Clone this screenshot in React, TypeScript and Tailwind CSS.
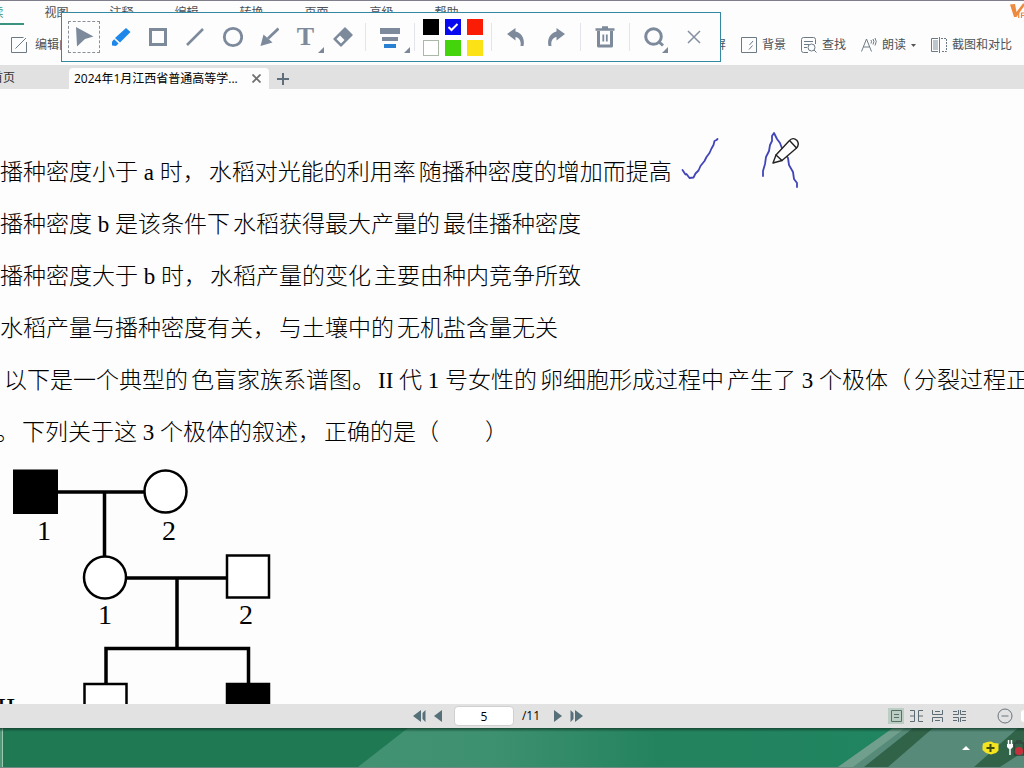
import type { ReactNode } from "react";
import clsx from "clsx";

const menus = ["阅读", "视图", "注释", "编辑", "转换", "页面", "高级", "帮助"];

const colors = [
  { name: "black", className: "bg-black" },
  { name: "blue", className: "bg-[#0808f0]" },
  { name: "red", className: "bg-[#fb1c06]" },
  { name: "white", className: "border border-[#a9b8a9] bg-white" },
  { name: "green", className: "bg-[#43d40b]" },
  { name: "yellow", className: "bg-[#fbe216]" },
];

const lines = [
  ["播种密度小于 a 时，", "水稻对光能的利用率", "随播种密度的增加而提高"],
  ["播种密度 b 是该条件下", "水稻获得最大产量的", "最佳播种密度"],
  ["播种密度大于 b 时，", "水稻产量的变化", "主要由种内竞争所致"],
  ["水稻产量与播种密度有关，", "与土壤中的", "无机盐含量无关"],
  ["以下是一个典型的", "色盲家族系谱图。", "II 代 1 号女性的", "卵细胞形成过程中", "产生了 3 个极体（", "分裂过程正常"],
  ["。", "下列关于这 3 个极体的叙述，", "正确的是（　　）"],
];

function ToolButton({ label, wide, corner, children }: { label: string; wide?: boolean; corner?: boolean; children: ReactNode }) {
  return (
    <button type="button" aria-label={label} className={clsx("relative flex h-full items-center justify-center", wide ? "w-10" : "w-[37px]")}>
      {children}
      {corner ? (
        <svg className="absolute right-0 bottom-2 size-[6px]" viewBox="0 0 6 6" aria-hidden="true">
          <path d="M6 0v6H0z" fill="#7c8797" />
        </svg>
      ) : null}
    </button>
  );
}

function Divider() {
  return <span className="mx-1 h-7 w-px shrink-0 bg-[#e3e5ea]" />;
}

function DrawingToolbar() {
  return (
    <div role="toolbar" aria-label="画笔" className="absolute top-3 left-[61px] z-10 flex h-[50px] items-center border border-[#3389a3] bg-[#fdfdfe] pr-[6px] pl-[3px] text-[#7c8a9b]">
      <ToolButton label="选择">
        <span className="flex size-8 items-center justify-center border border-dashed border-[#8b8f96]">
          <svg className="size-5" viewBox="0 0 20 20" aria-hidden="true">
            <path d="M2 0 19.500 9.500 11 12 3 19.500z" fill="currentColor" />
          </svg>
        </span>
      </ToolButton>
      <ToolButton label="画笔">
        <svg className="size-5" viewBox="0 0 20 20" fill="#1e87ea" aria-hidden="true">
          <path d="M15 1 19.500 5 9 15.500 4 11z" />
          <path d="M3.200 12.300 7.500 16.500 5 19 1 18.500V14.500z" />
        </svg>
      </ToolButton>
      <ToolButton label="矩形">
        <svg className="size-5" viewBox="0 0 20 20" fill="none" stroke="currentColor" strokeWidth="3" aria-hidden="true">
          <path d="M2.500 2.500h15v15h-15z" />
        </svg>
      </ToolButton>
      <ToolButton label="直线">
        <svg className="size-5" viewBox="0 0 20 20" fill="none" stroke="currentColor" strokeWidth="2.500" aria-hidden="true">
          <path d="M2 18 18 2" />
        </svg>
      </ToolButton>
      <ToolButton label="圆形">
        <svg className="size-[22px]" viewBox="0 0 22 22" fill="none" stroke="currentColor" strokeWidth="2.800" aria-hidden="true">
          <circle cx="12" cy="11" r="8.700" />
        </svg>
      </ToolButton>
      <ToolButton label="箭头">
        <svg className="size-5" viewBox="0 0 20 20" aria-hidden="true">
          <path d="M19.500 1.500 9 11.500" stroke="currentColor" strokeWidth="2.800" />
          <path d="M1.500 19 4.500 7.500 13.500 15.500z" fill="currentColor" />
        </svg>
      </ToolButton>
      <ToolButton label="文字" corner>
        <span className="font-['Liberation_Serif',serif] text-[26px] leading-none font-bold">T</span>
      </ToolButton>
      <ToolButton label="橡皮擦">
        <svg className="size-[22px]" viewBox="0 0 22 22" aria-hidden="true">
          <path d="M13 2 20 9 9 20 2 13z" fill="currentColor" stroke="currentColor" strokeWidth="1.500" strokeLinejoin="round" />
          <path d="M8 9.500 12.500 14 9 17.500 4.500 13z" fill="#fff" />
        </svg>
      </ToolButton>
      <Divider />
      <ToolButton label="线宽" wide corner>
        <svg className="size-[22px]" viewBox="0 0 22 22" aria-hidden="true">
          <path d="M1 2h20v6H1zM3 11h16v4H3z" fill="currentColor" />
          <path d="M5 18h12v4H5z" fill="#2a80d2" />
        </svg>
      </ToolButton>
      <Divider />
      <div className="grid grid-cols-3 gap-x-[6px] gap-y-[5px] px-1">
        {colors.map((color) => (
          <button key={color.name} type="button" aria-label={color.name} className={clsx("size-4", color.className)}>
            {color.name === "blue" ? (
              <svg viewBox="0 0 16 16" fill="none" stroke="#fff" strokeWidth="2" aria-hidden="true">
                <path d="m3.500 8 3 3 6-6" />
              </svg>
            ) : null}
          </button>
        ))}
      </div>
      <Divider />
      <ToolButton label="撤销" wide>
        <svg className="size-5" viewBox="0 0 20 20" fill="currentColor" aria-hidden="true">
          <path d="M1 7 9.500 1v3.500C16 6 19 12 17.500 19h-3C15.500 14 13 10.500 9.500 10v3.500z" />
        </svg>
      </ToolButton>
      <ToolButton label="重做" wide>
        <svg className="size-5" viewBox="0 0 20 20" fill="currentColor" aria-hidden="true">
          <path d="M19 7 10.500 1v3.500C4 6 1 12 2.500 19h3C4.500 14 7 10.500 10.500 10v3.500z" />
        </svg>
      </ToolButton>
      <Divider />
      <ToolButton label="删除" wide>
        <svg className="size-[22px]" viewBox="0 0 22 22" fill="none" stroke="currentColor" aria-hidden="true">
          <path d="M1.500 3.500h19M8 1.500h6" strokeWidth="2.500" />
          <path d="M4.500 5v15h13V5" strokeWidth="3" strokeLinejoin="round" />
          <path d="M9.300 8.500v7M12.800 8.500v7" strokeWidth="1.800" />
        </svg>
      </ToolButton>
      <Divider />
      <ToolButton label="放大镜" wide>
        <svg className="size-[22px]" viewBox="0 0 22 22" fill="none" stroke="currentColor" strokeWidth="3" aria-hidden="true">
          <circle cx="10.500" cy="10.500" r="7.800" />
          <path d="m15.500 15.500 4.500 4" />
        </svg>
        <svg className="absolute right-[6px] bottom-2 size-[6px]" viewBox="0 0 6 6" aria-hidden="true">
          <path d="M6 0v6H0z" fill="#7c8797" />
        </svg>
      </ToolButton>
      <ToolButton label="关闭" wide>
        <svg className="size-[14px]" viewBox="0 0 14 14" fill="none" stroke="#8290a0" strokeWidth="1.500" aria-hidden="true">
          <path d="m1 1 12 12M13 1 1 13" />
        </svg>
      </ToolButton>
    </div>
  );
}

function RibbonButton({ label, icon, caret, roomy }: { label: string; icon?: ReactNode; caret?: boolean; roomy?: boolean }) {
  return (
    <button type="button" className={clsx("flex shrink-0 items-center whitespace-nowrap", roomy ? "gap-2" : "gap-[5px]")}>
      {icon ? (
        <svg className="size-4" viewBox="0 0 16 16" fill="none" stroke="#6c7a86" aria-hidden="true">
          {icon}
        </svg>
      ) : null}
      {label}
      {caret ? (
        <svg className="h-[3px] w-[5px]" viewBox="0 0 5 3" aria-hidden="true">
          <path d="M0 0h5L2.500 3z" fill="#555" />
        </svg>
      ) : null}
    </button>
  );
}

function Header() {
  return (
    <header className="border-t border-[#7f7f8b] bg-[#fdfdfd] text-[#4b5157]">
      <div className="flex h-[24px] items-stretch justify-between overflow-hidden">
        <nav className="-ml-[41px] flex">
          {menus.map((menu, index) => (
            <button key={menu} type="button" className={clsx("w-[65px] border-b-2 pt-[2px] leading-5", index === 0 ? "border-[#3a9480] text-[#3a9480]" : "border-transparent")}>
              {menu}
            </button>
          ))}
        </nav>
        <svg className="h-[20px] w-[14px]" viewBox="0 0 14 20" aria-label="VIP">
          <path d="M0 3.500 5 3l1.500 8L13 2.500h3L6.500 16H4z" fill="#ee8a3e" />
          <path d="M8.700 11.500V17M11.500 17v-5H15v2.500h-3" fill="none" stroke="#ee8a3e" strokeWidth="1.200" />
        </svg>
      </div>
      <div className="flex h-10 items-center justify-between pr-3 pl-[11px]">
        <RibbonButton label="编辑内容" roomy icon={<path d="M12.500.500H.500v15h15V5M4.500 11.500 15 1" />} />
        <div className="flex items-center gap-[15px]">
          <RibbonButton label="全屏" />
          <RibbonButton label="背景" icon={<path d="M.500.500h15v15H.500zM8.500 8l3.500-4M8 12.500l3.500-4" />} />
          <RibbonButton
            label="查找"
            icon={
              <>
                <path d="M7 15.500H2.500q-2 0-2-2v-11q0-2 2-2h10q2 0 2 2V7M3 4.500h9M3 7.500h5M3 10.500h3" />
                <circle cx="10.500" cy="10.500" r="3.500" />
                <path d="m13 13 2.500 2.500" />
              </>
            }
          />
          <RibbonButton
            label="朗读"
            caret
            icon={<path d="M.500 14.500 5.500 2l5 12.500M2.500 10h6M10 3q1 1.500 0 3.500M12 2q1.800 2.500 0 5.500M14 1q2.500 3.500 0 7.500" />}
          />
          <RibbonButton
            label="截图和对比"
            icon={
              <>
                <path d="M2 3h5v10H2z" fill="#bcc6cb" stroke="none" />
                <path d="M7 1.500H.500v13H7M8.500 0v16" />
                <path d="M10 1.500h5.500v13H10" strokeDasharray="2 1" />
              </>
            }
          />
        </div>
      </div>
    </header>
  );
}

function Tabs() {
  return (
    <div className="flex h-6 items-end bg-[#e1e1e1] text-[#333]">
      <button type="button" className="-ml-[9px] h-full w-[78px] pt-px text-left">
        首页
      </button>
      <div className="flex h-[21px] w-[200px] items-center justify-between rounded-t-sm bg-[#fdfdfd] pr-2 pl-[5px] text-black">
        <a href="#document" className="truncate leading-[18px]">
          2024年1月江西省普通高等学...
        </a>
        <button type="button" aria-label="关闭标签">
          <svg className="size-[9px]" viewBox="0 0 9 9" fill="none" stroke="#707070" strokeWidth="1.800" aria-hidden="true">
            <path d="m.500.500 8 8M8.500.500l-8 8" />
          </svg>
        </button>
      </div>
      <button type="button" aria-label="新建标签" className="flex h-[21px] items-center px-2">
        <svg className="size-3" viewBox="0 0 12 12" fill="none" stroke="#5f6f7c" strokeWidth="2" aria-hidden="true">
          <path d="M6 0v12M0 6h12" />
        </svg>
      </button>
    </div>
  );
}

function Ink() {
  return (
    <svg className="absolute top-10 left-[680px] h-[60px] w-[120px]" viewBox="0 0 120 60" fill="none" strokeLinecap="round" strokeLinejoin="round" aria-hidden="true">
      <g stroke="#4145b8" strokeWidth="1.800">
        <path d="m2.500 41 3 4.500 1-.500 3 4 4-.500 2-4 3-3 2-4.500 4-5 2-4 3-4 2-4.500 2-3.500 1-4 2-1 1-1" />
        <path d="m83 47 0-5 2-7 1-7 3-6 1-6 2-4 0-5 2-3 3 6 3 4 3 8 5 7 1 7 4 7 1 7 3 4 0 4" />
      </g>
      <g stroke="#222" strokeWidth="1.400" fill="#fdfdfd">
        <path d="m96 26 13-14q4-4.500 8-.500 3 4-1 8L102 31.500 93 34z" />
        <path d="m96 26 6 5.500M110 12l6.500 7" />
      </g>
    </svg>
  );
}

function Pedigree() {
  return (
    <svg className="block h-[280px] w-[290px]" viewBox="0 459 290 280" fill="none" stroke="#000" strokeWidth="3" aria-label="色盲家族系谱图">
      <path d="M14 470.500h43v42.500H14z" fill="#000" strokeWidth="2" />
      <path d="M57 492h88M104.500 492v64M127 578h100M177 578v70M106 683v-34.500h142.500V683" strokeWidth="3.500" />
      <g strokeWidth="2.500">
        <circle cx="165.500" cy="491.500" r="21" fill="#fff" />
        <circle cx="105" cy="577.500" r="21" fill="#fff" />
        <path d="M227 555.500h42v42h-42zM84.500 684h42v42h-42z" fill="#fff" />
        <path d="M227 684h42v42h-42z" fill="#000" />
      </g>
      <g className="font-['Liberation_Serif',serif] text-[28px]" fill="#000" stroke="none" textAnchor="middle">
        <text x="44" y="540">1</text>
        <text x="169" y="540">2</text>
        <text x="105" y="624">1</text>
        <text x="246" y="624">2</text>
        <text x="6" y="717">II</text>
      </g>
    </svg>
  );
}

function PageNav() {
  return (
    <footer className="flex h-6 shrink-0 items-center bg-[#e2e2e2] text-black">
      <div className="flex-1" />
      <div className="flex items-center">
        <button type="button" aria-label="首页">
          <svg className="h-3 w-[13px]" viewBox="0 0 13 12" fill="#56707a" aria-hidden="true">
            <path d="M8 0v12L0 6zM12.500 0v12l-3-3V3z" />
          </svg>
        </button>
        <button type="button" aria-label="上一页" className="ml-2">
          <svg className="h-3 w-2" viewBox="0 0 8 12" fill="#56707a" aria-hidden="true">
            <path d="M8 0v12L0 6z" />
          </svg>
        </button>
        <input aria-label="页码" defaultValue="5" className="ml-3 h-5 w-[60px] rounded-sm border border-[#cfcfcf] bg-white text-center" />
        <span className="ml-2">/11</span>
        <button type="button" aria-label="下一页" className="ml-[14px]">
          <svg className="h-3 w-2" viewBox="0 0 8 12" fill="#56707a" aria-hidden="true">
            <path d="M0 0v12l8-6z" />
          </svg>
        </button>
        <button type="button" aria-label="末页" className="ml-2">
          <svg className="h-3 w-[13px]" viewBox="0 0 13 12" fill="#56707a" aria-hidden="true">
            <path d="M5 0v12l8-6zM.500 0v12l3-3V3z" />
          </svg>
        </button>
      </div>
      <div className="flex flex-1 items-center justify-end pl-7">
        <button type="button" aria-label="单页" className="mr-[6px] flex size-4 items-center justify-center bg-[#bccdc4]">
          <svg className="h-3 w-[11px]" viewBox="0 0 11 12" fill="none" stroke="#557268" aria-hidden="true">
            <path d="M.500.500h10v11H.500zM3 4.500h5M3 7.500h5" />
          </svg>
        </button>
        <button type="button" aria-label="双页" className="mr-[9px]">
          <svg className="h-3 w-[13px]" viewBox="0 0 13 12" fill="none" stroke="#5d6c74" aria-hidden="true">
            <path d="M0 .500h4.500v11H0M13 .500H8.500v11H13M0 6h4M9 6h4" />
          </svg>
        </button>
        <button type="button" aria-label="连续" className="mr-[10px]">
          <svg className="h-3 w-[11px]" viewBox="0 0 11 12" fill="none" stroke="#5d6c74" aria-hidden="true">
            <path d="M.500 0v4.500h10V0M.500 12V7.500h10V12M3 1.500h5M3 10.500h5" />
          </svg>
        </button>
        <button type="button" aria-label="双页连续" className="mr-[31px]">
          <svg className="h-3 w-[13px]" viewBox="0 0 13 12" fill="none" stroke="#5d6c74" aria-hidden="true">
            <path d="M0 4.500h5.500V0M7.500 0v4.500H13M0 7.500h5.500V12M7.500 12V7.500H13M0 1.500h4M9 1.500h4M0 10.500h4M9 10.500h4" />
          </svg>
        </button>
        <button type="button" aria-label="缩小" className="mr-2">
          <svg className="size-4" viewBox="0 0 16 16" fill="none" stroke="#68757b" aria-hidden="true">
            <circle cx="8" cy="8" r="7" />
            <path d="M4.500 8h7" />
          </svg>
        </button>
        <span className="h-3 w-[3px] rounded-l-full bg-white" />
      </div>
    </footer>
  );
}

function Taskbar() {
  return (
    <div className="relative flex h-10 shrink-0 items-center justify-end overflow-hidden border-b border-[#6f8a80] bg-[#1f7a54]">
      <svg className="absolute inset-0 size-full" viewBox="0 0 1024 40" preserveAspectRatio="none" aria-hidden="true">
        <defs>
          <linearGradient id="sheen">
            <stop offset="0" stopColor="#439373" />
            <stop offset=".25" stopColor="#3d9070" />
            <stop offset=".55" stopColor="#24835f" />
            <stop offset="1" stopColor="#1f8560" />
          </linearGradient>
          <linearGradient id="shade" x2="0" y2="1">
            <stop offset="0" stopColor="#123b2a" stopOpacity=".8" />
            <stop offset="1" stopColor="#123b2a" stopOpacity="0" />
          </linearGradient>
        </defs>
        <path d="M408 0H900L845 40H358z" fill="url(#sheen)" />
        <path d="M893 0H1024V40H838z" fill="#578a79" />
        <path d="M893 0h12L853 40H838z" fill="#70a08d" />
        <path d="M913 0h20L888 40H864zM1018 0h6v24L1000 40H974z" fill="#316348" />
        <path d="M0 0h2v40H0z" fill="#4f9877" />
        <path d="M2.500 0v40" stroke="#9cc9b3" />
        <path d="M0 0h1024v4H0z" fill="url(#shade)" />
      </svg>
      <div className="relative flex items-center pt-px">
        <button type="button" aria-label="显示隐藏的图标" className="mr-3">
          <svg className="h-1 w-2" viewBox="0 0 8 4" fill="#fff" aria-hidden="true">
            <path d="M4 0 8 4H0z" />
          </svg>
        </button>
        <svg className="mr-2 h-[14px] w-[17px]" viewBox="0 0 17 14" aria-hidden="true">
          <path d="M1 2.500 5 1l4-.500 3 1.500 4.500.500v7L14 12l-5 1.500-5-1.500L.500 9V5z" fill="#f3e321" />
          <path d="M8.500 3v8M4.500 7h8" stroke="#3d4a10" strokeWidth="2" />
        </svg>
        <svg className="h-4 w-[17px]" viewBox="0 0 17 16" fill="none" aria-hidden="true">
          <path d="M7.500 3h9v12h-9zM10 1h4v2h-4z" stroke="#31473d" strokeWidth="1.500" />
          <path d="M1.500 0v4M4.500 0v4M3 8v7" stroke="#fff" strokeWidth="1.500" />
          <path d="M0 4h6v3L4 9H2L0 7z" fill="#fff" />
          <circle cx="12" cy="11" r="4" fill="#c5313a" />
        </svg>
      </div>
    </div>
  );
}

export default function App() {
  return (
    <div className="relative flex h-screen flex-col overflow-hidden bg-[#fdfdfd] font-['Open_Sans','Noto_Sans_CJK_SC',sans-serif] text-xs">
      <Header />
      <DrawingToolbar />
      <Tabs />
      <main id="document" className="relative min-h-0 flex-1 overflow-hidden pt-[58px]">
        <div className="font-['Liberation_Serif','Noto_Sans_CJK_SC',serif] text-[23px] leading-[52px] font-light text-black">
          {lines.map((line, index) => (
            <p key={line[0]} className={clsx("flex gap-[3px] whitespace-nowrap", index === 4 && "pl-1", index === 5 && "-ml-1")}>
              {line.map((phrase) => (
                <span key={phrase}>{phrase}</span>
              ))}
            </p>
          ))}
        </div>
        <Pedigree />
        <Ink />
      </main>
      <PageNav />
      <Taskbar />
    </div>
  );
}
